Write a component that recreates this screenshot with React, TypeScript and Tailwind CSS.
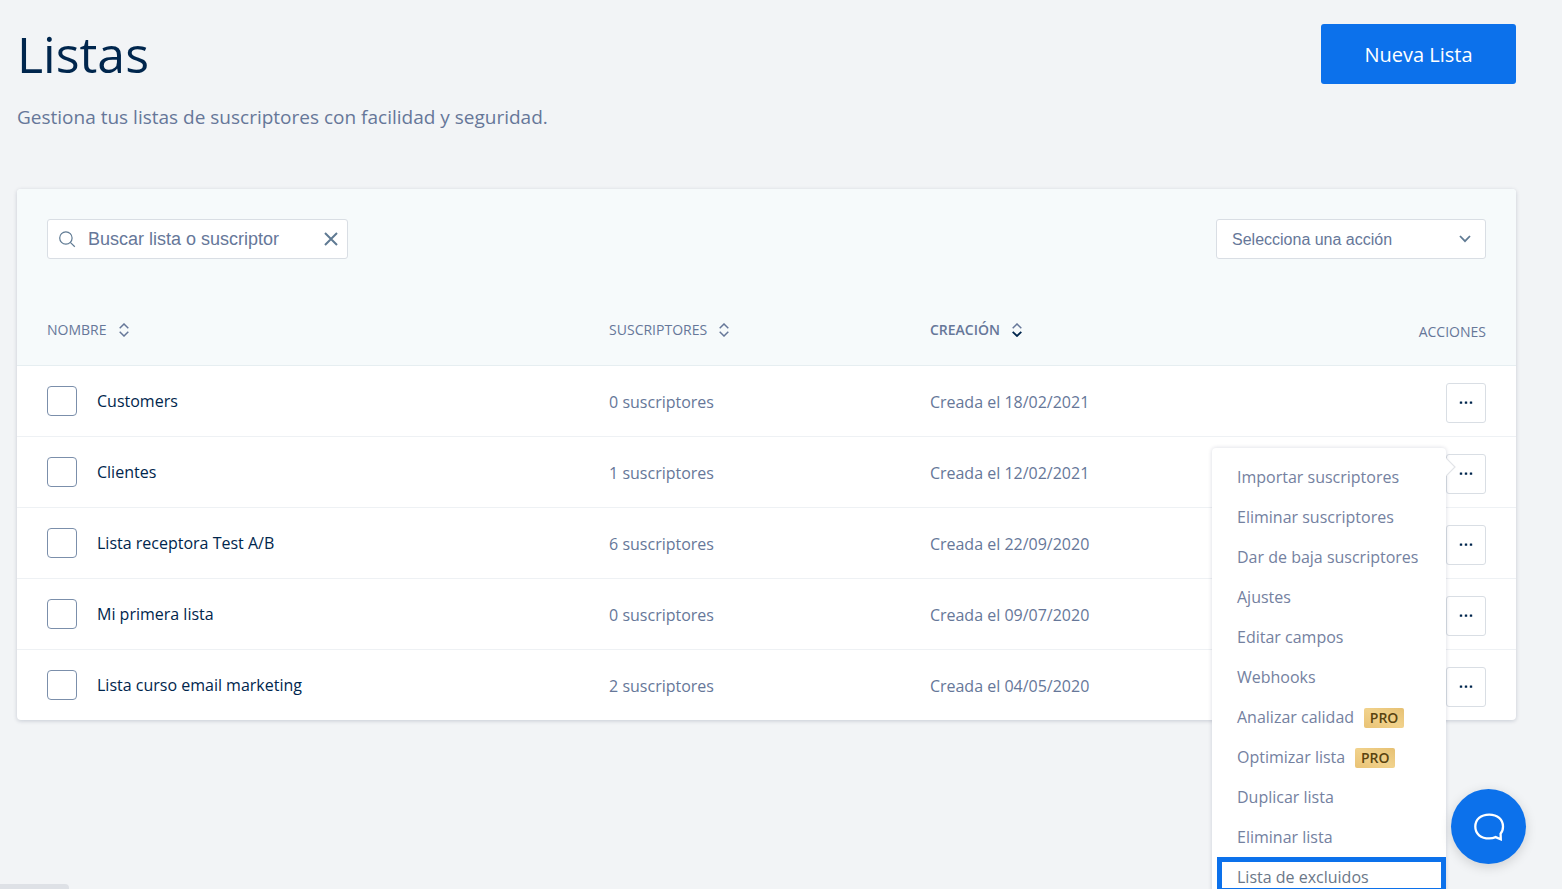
import React from 'react';

const lists = [
  { id: 1, name: 'Customers', subscribers: 0, created: '18/02/2021' },
  { id: 2, name: 'Clientes', subscribers: 1, created: '12/02/2021' },
  { id: 3, name: 'Lista receptora Test A/B', subscribers: 6, created: '22/09/2020' },
  { id: 4, name: 'Mi primera lista', subscribers: 0, created: '09/07/2020' },
  { id: 5, name: 'Lista curso email marketing', subscribers: 2, created: '04/05/2020' },
];

const menuItems = [
  { label: 'Importar suscriptores' },
  { label: 'Eliminar suscriptores' },
  { label: 'Dar de baja suscriptores' },
  { label: 'Ajustes' },
  { label: 'Editar campos' },
  { label: 'Webhooks' },
  { label: 'Analizar calidad', pro: true },
  { label: 'Optimizar lista', pro: true },
  { label: 'Duplicar lista' },
  { label: 'Eliminar lista' },
];

function SortIcon({ active = false }: { active?: boolean }) {
  return (
    <svg width="10" height="14" viewBox="0 0 10 14" fill="none" strokeWidth="1.5">
      <path d="M0.7 5.2L5 1L9.3 5.2" stroke="#667799" />
      <path d="M0.7 8.8L5 13L9.3 8.8" stroke={active ? '#00264d' : '#667799'} strokeWidth={active ? 1.8 : 1.5} />
    </svg>
  );
}

function SortButton({ label, active = false }: { label: string; active?: boolean }) {
  return (
    <button type="button" className={active ? 'flex items-center gap-3 font-semibold' : 'flex items-center gap-3'}>
      {label}
      <SortIcon active={active} />
    </button>
  );
}

function ActionsMenu() {
  return (
    <div className="absolute right-full -top-[6px] z-10 w-[234px] rounded bg-white py-[9px] text-left text-base text-[#74819f] shadow-[0_0_4px_rgba(0,20,60,0.16)]">
      {/* Arrow pointing at the button */}
      <svg className="absolute left-full top-[10px]" width="10" height="18" viewBox="0 0 10 18">
        <path d="M0 0L9 9L0 18" fill="#fff" stroke="#e2e4e8" strokeWidth="1.2" />
      </svg>
      <ul>
        {menuItems.map((item) => (
          <li key={item.label}>
            <a href="#" className="flex h-10 items-center gap-[10px] pl-[25px] whitespace-nowrap">
              {item.label}
              {item.pro && (
                <span className="mt-[2px] flex h-5 w-10 items-center justify-center rounded-xs bg-linear-to-tr from-[#e9c274] via-[#f1d28c] to-[#e6c072] text-sm font-semibold text-[#59430f]">
                  PRO
                </span>
              )}
            </a>
          </li>
        ))}
        <li>
          <a href="#" className="ml-[5px] flex h-9 items-center border-[5px] border-[#0c71eb] pl-[15px] pt-1 whitespace-nowrap text-[#6b7788]">
            Lista de excluidos
          </a>
        </li>
      </ul>
    </div>
  );
}

function ActionsButton({ open }: { open: boolean }) {
  return (
    <div className="relative ml-auto size-10">
      <button type="button" aria-label="Acciones" className="flex size-10 items-center justify-center rounded-[3px] border border-[#d9dee4] bg-white">
        <svg width="14" height="3" viewBox="0 0 14 3" fill="#00264d">
          <rect x="0.8" y="0.5" width="2.4" height="2.2" rx="0.3" />
          <rect x="5.8" y="0.5" width="2.4" height="2.2" rx="0.3" />
          <rect x="10.8" y="0.5" width="2.4" height="2.2" rx="0.3" />
        </svg>
      </button>
      {open && <ActionsMenu />}
    </div>
  );
}

function Toolbar() {
  return (
    <div className="flex items-start justify-between rounded-t bg-[#f6fafb] px-[30px] pt-[30px] pb-9 font-['Liberation_Sans',sans-serif] text-[#667799]">
      <div className="flex h-10 w-[301px] items-center rounded-[3px] border border-[#d9dee4] bg-white pl-[11px] pr-[9px]">
        <svg className="shrink-0" width="17" height="17" viewBox="0 0 17 17" fill="none" stroke="#5f7a93" strokeWidth="1.2">
          <circle cx="6.9" cy="7" r="6.2" />
          <path d="M11.3 11.4L15.8 15.8" />
        </svg>
        <input
          type="text"
          aria-label="Buscar lista o suscriptor"
          placeholder="Buscar lista o suscriptor"
          className="ml-3 min-w-0 flex-1 bg-transparent text-lg outline-none placeholder:text-[#667799] placeholder:opacity-100" />
        <button type="button" aria-label="Borrar">
          <svg width="14" height="14" viewBox="0 0 14 14" fill="none" stroke="#5f7a93" strokeWidth="2">
            <path d="M1 1L13 13M13 1L1 13" />
          </svg>
        </button>
      </div>
      <div className="relative w-[270px]">
        <select aria-label="Selecciona una acción" className="h-10 w-full appearance-none rounded-[3px] border border-[#d9dee4] bg-white px-[15px] pt-[2px] text-base">
          <option>Selecciona una acción</option>
        </select>
        <svg className="pointer-events-none absolute right-[15px] top-4" width="12" height="8" viewBox="0 0 12 8" fill="none" stroke="#5f7a93" strokeWidth="1.8">
          <path d="M1 1L6 6.2L11 1" />
        </svg>
      </div>
    </div>
  );
}

export default function App() {
  return (
    <div className="relative min-h-screen overflow-hidden bg-[#f2f4f6] pl-[17px] pr-[46px] pt-6 font-['Open_Sans',sans-serif] text-[#667799]">
      <header className="flex items-start justify-between">
        <div>
          <h1 className="text-[50px] leading-[60px] text-[#00264d]">Listas</h1>
          <p className="mt-5 text-[19px] leading-[26px]">Gestiona tus listas de suscriptores con facilidad y seguridad.</p>
        </div>
        <button type="button" className="h-[60px] w-[195px] rounded-[3px] bg-[#0c71eb] pt-[2px] text-xl text-white">
          Nueva Lista
        </button>
      </header>

      <main className="mt-[59px] rounded bg-white shadow-[0_1px_4px_rgba(0,20,60,0.18)]">
        <Toolbar />
        <table className="w-full table-fixed border-collapse text-left text-base">
          <thead className="bg-[#f6fafb] text-sm">
            <tr className="h-[70px] border-b border-[#e6eef1]">
              <th className="w-[39.5%] pl-[30px] font-normal"><SortButton label="NOMBRE" /></th>
              <th className="w-[21.4%] font-normal"><SortButton label="SUSCRIPTORES" /></th>
              <th className="font-normal"><SortButton label="CREACIÓN" active /></th>
              <th className="w-[200px] pt-1 pr-[30px] text-right font-normal">ACCIONES</th>
            </tr>
          </thead>
          <tbody>
            {lists.map((list) => (
              <tr key={list.id} className="h-[71px] border-b border-[#eef1f4] last:border-b-0">
                <td className="pl-[30px]">
                  <label className="flex items-center gap-5 text-[#00264d]">
                    <input type="checkbox" className="size-[30px] appearance-none rounded border border-[#7b8fab] bg-white" />
                    {list.name}
                  </label>
                </td>
                <td className="pt-[2px]">{list.subscribers} suscriptores</td>
                <td className="pt-[2px]">Creada el {list.created}</td>
                <td className="pt-[17px] pr-[30px] align-top">
                  <ActionsButton open={list.id === 2} />
                </td>
              </tr>
            ))}
          </tbody>
        </table>
      </main>

      <button type="button" aria-label="Chat" className="fixed right-9 bottom-[25px] z-20 flex size-[75px] items-center justify-center rounded-full bg-[#0c71eb] shadow-[0_3px_12px_rgba(0,0,0,0.15)]">
        <svg width="32" height="28" viewBox="0 0 32 28" fill="none" stroke="#fff" strokeWidth="2.3" strokeLinejoin="miter">
          <path d="M27.6 20.6C29.4 18.8 30 16.4 30 13.6C30 6.2 24.5 1.6 16.2 1.6C7.8 1.6 2.3 6.2 2.3 13.6C2.3 21 7.8 25.4 16.2 25.4C18.6 25.4 20.6 25 22.6 24.1L27.8 26.3Z" />
        </svg>
      </button>

      {/* Link status bubble */}
      <div className="fixed bottom-0 left-0 h-[5px] w-[69px] rounded-tr bg-[#dee1e6]" />
    </div>
  );
}
